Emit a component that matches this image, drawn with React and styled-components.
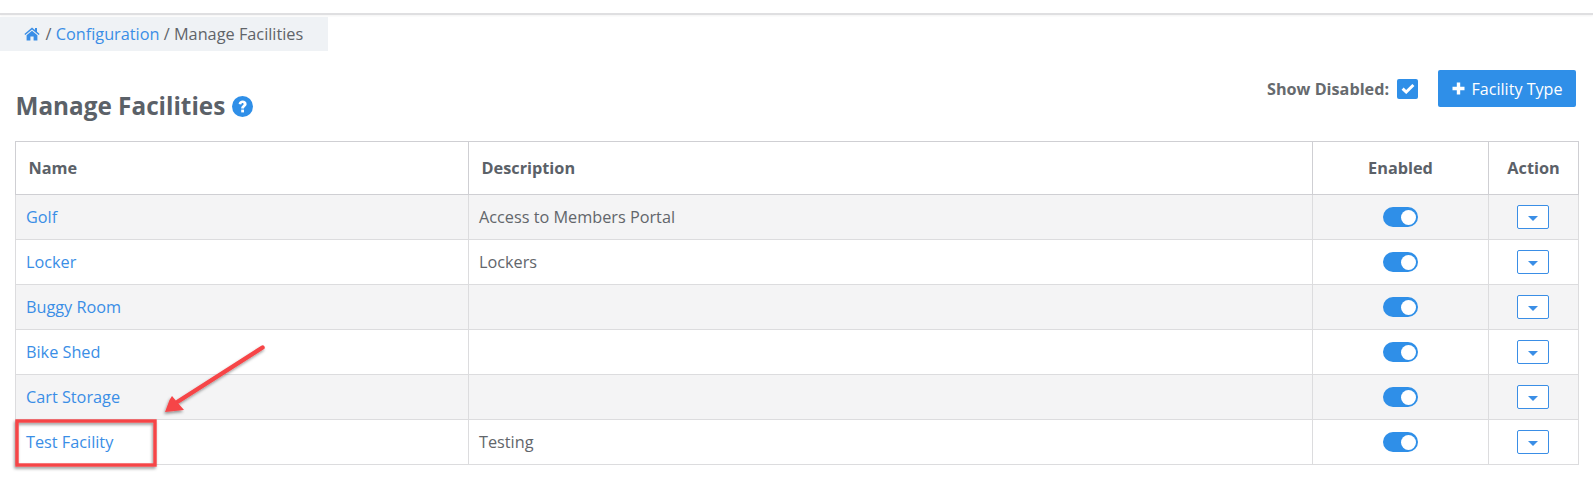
import React from "react";
import styled, { createGlobalStyle } from "styled-components";

const Global = createGlobalStyle`
  html, body { margin: 0; padding: 0; background: #fff; }
  body { font-family: "Open Sans", "Liberation Sans", sans-serif; color: #5b6168; overflow: hidden; }
`;
const Page = styled.div`position: relative; width: 1593px; height: 479px; overflow: hidden;`;
const TopBar = styled.div`height: 13px; border-bottom: 2px solid #dfdfe1; box-shadow: 0 1px 2px rgba(0,0,0,.05);`;
const Crumbs = styled.nav`
  margin-top: 2px; width: 328px; height: 34px; box-sizing: border-box; background: #eff2f5;
  padding-left: 24px; display: flex; align-items: center; font-size: 16.3px; color: #5f6469; white-space: pre;
`;
const Home = styled.svg`margin-right: -3px;`;
const Link = styled.a`color: #3a8ee6; text-decoration: none;`;
const Header = styled.div`
  display: flex; justify-content: space-between; align-items: flex-start;
  padding: 19px 17px 0 15.5px; height: 90px; box-sizing: border-box;
`;
const Title = styled.h1`
  margin: 20px 0 0; font-size: 24.3px; line-height: 32px; font-weight: 700; color: #5b6168;
  display: flex; align-items: center; gap: 7px;
`;
const Tools = styled.div`display: flex; align-items: center;`;
const ShowLabel = styled.span`font-size: 16.2px; font-weight: 700; color: #666a6e; margin-right: 8px;`;
const Check = styled.span`
  width: 21px; height: 20px; border-radius: 2px; background: #2f8fe8; display: flex;
  align-items: center; justify-content: center; margin-right: 20px;
`;
const Primary = styled.button`
  width: 138px; height: 37px; border: 0; border-radius: 2px; background: #2f8fe8; color: #fff;
  font: 400 16.1px "Open Sans", sans-serif; display: flex; align-items: center; justify-content: center; gap: 7px; padding: 0;
`;
const Table = styled.table`
  margin-left: 15px; width: 1563px; border-collapse: collapse; table-layout: fixed; font-size: 16.25px;
  border: 1px solid #cfcfd3;
`;
const Th = styled.th`
  height: 52px; padding: 0 12.5px; font-size: 16.3px; font-weight: 700; color: #5b6168;
  text-align: ${p => (p.$center ? "center" : "left")};
  border: 1px solid #cfcfd3;
`;
const Row = styled.tr`background: ${p => (p.$odd ? "#f4f4f5" : "#fff")};`;
const Td = styled.td`
  height: 44px; padding: 0 10px; color: #62666b; border: 1px solid #dcdcde;
  text-align: ${p => (p.$center ? "center" : "left")};
`;
const Toggle = styled.span`
  display: inline-block; position: relative; top: -1px; width: 35px; height: 20px; border-radius: 10px;
  background: #2f8fe8; vertical-align: middle;
  &::after { content: ""; position: absolute; right: 2px; top: 2.5px; width: 15px; height: 15px; border-radius: 50%; background: #fff; }
`;
const Caret = styled.button`
  position: relative; left: -1px;
  width: 32px; height: 24px; padding: 0; border: 1px solid #3a8ee6; border-radius: 2px; background: #fff;
  display: inline-flex; align-items: center; justify-content: center; vertical-align: middle;
  &::after { content: ""; margin-top: 2px; border-left: 5px solid transparent; border-right: 5px solid transparent; border-top: 5px solid #3a8ee6; }
`;
const Annotation = styled.svg`position: absolute; left: 0; top: 0; pointer-events: none;`;

const rows = [
  ["Golf", "Access to Members Portal"],
  ["Locker", "Lockers"],
  ["Buggy Room", ""],
  ["Bike Shed", ""],
  ["Cart Storage", ""],
  ["Test Facility", "Testing"],
];

export default function App() {
  return (
    <Page>
      <Global />
      <TopBar />
      <Crumbs>
        <Home width="16" height="14" viewBox="0 0 16 14" fill="#3a8ee6">
          <path d="M8 0.6 L0.4 7 L1.3 8.1 L8 2.6 L14.7 8.1 L15.6 7 L13 4.8 V1 H11 V3.1 Z" />
          <path d="M8 3.7 L2.6 8.2 V13.4 H6.4 V9.6 H9.6 V13.4 H13.4 V8.2 Z" />
        </Home>
        {"  / "}<Link>Configuration</Link>{" / Manage Facilities"}
      </Crumbs>
      <Header>
        <Title>
          Manage Facilities
          <svg width="21" height="21" viewBox="0 0 21 21">
            <circle cx="10.5" cy="10.5" r="10.5" fill="#2f8fe8" />
            <path d="M6.6 8 C6.8 5.6 8.6 4.4 10.6 4.4 C12.9 4.4 14.6 5.8 14.6 7.9 C14.6 10.6 12 10.4 12 12.6 H9.2 C9.1 9.6 11.6 9.6 11.6 8.1 C11.6 7.5 11.2 7 10.5 7 C9.8 7 9.4 7.6 9.3 8.4 Z" fill="#fff" />
            <rect x="9.2" y="13.6" width="2.8" height="2.8" fill="#fff" />
          </svg>
        </Title>
        <Tools>
          <ShowLabel>Show Disabled:</ShowLabel>
          <Check>
            <svg width="14" height="11" viewBox="0 0 14 11">
              <path d="M1.6 5.6 L5.2 9 L12.4 2" fill="none" stroke="#fff" strokeWidth="3" />
            </svg>
          </Check>
          <Primary>
            <svg width="13" height="13" viewBox="0 0 13 13"><path d="M4.8 0.5 H8.2 V4.8 H12.5 V8.2 H8.2 V12.5 H4.8 V8.2 H0.5 V4.8 H4.8 Z" fill="#fff" /></svg>
            Facility Type
          </Primary>
        </Tools>
      </Header>
      <Table>
        <colgroup>
          <col style={{ width: 453 }} />
          <col style={{ width: 844 }} />
          <col style={{ width: 176 }} />
          <col style={{ width: 90 }} />
        </colgroup>
        <thead>
          <tr>
            <Th>Name</Th>
            <Th>Description</Th>
            <Th $center>Enabled</Th>
            <Th $center>Action</Th>
          </tr>
        </thead>
        <tbody>
          {rows.map(([name, desc], i) => (
            <Row key={name} $odd={i % 2 === 0}>
              <Td><Link>{name}</Link></Td>
              <Td>{desc}</Td>
              <Td $center><Toggle /></Td>
              <Td $center><Caret /></Td>
            </Row>
          ))}
        </tbody>
      </Table>
      <Annotation width="1593" height="479">
        <defs>
          <filter id="sh" x="-20%" y="-20%" width="140%" height="140%">
            <feDropShadow dx="-1" dy="2" stdDeviation="1.6" floodColor="#000" floodOpacity="0.4" />
          </filter>
        </defs>
        <g filter="url(#sh)">
          <rect x="17" y="421" width="138" height="44" fill="none" stroke="#f64447" strokeWidth="3.4" />
          <path d="M262.5 347.5 L178 401.5" stroke="#f64447" strokeWidth="4.4" strokeLinecap="round" fill="none" />
          <path d="M165 412 L169.500 400 L172 396 L184 410 Z" fill="#f64447" />
        </g>
      </Annotation>
    </Page>
  );
}
